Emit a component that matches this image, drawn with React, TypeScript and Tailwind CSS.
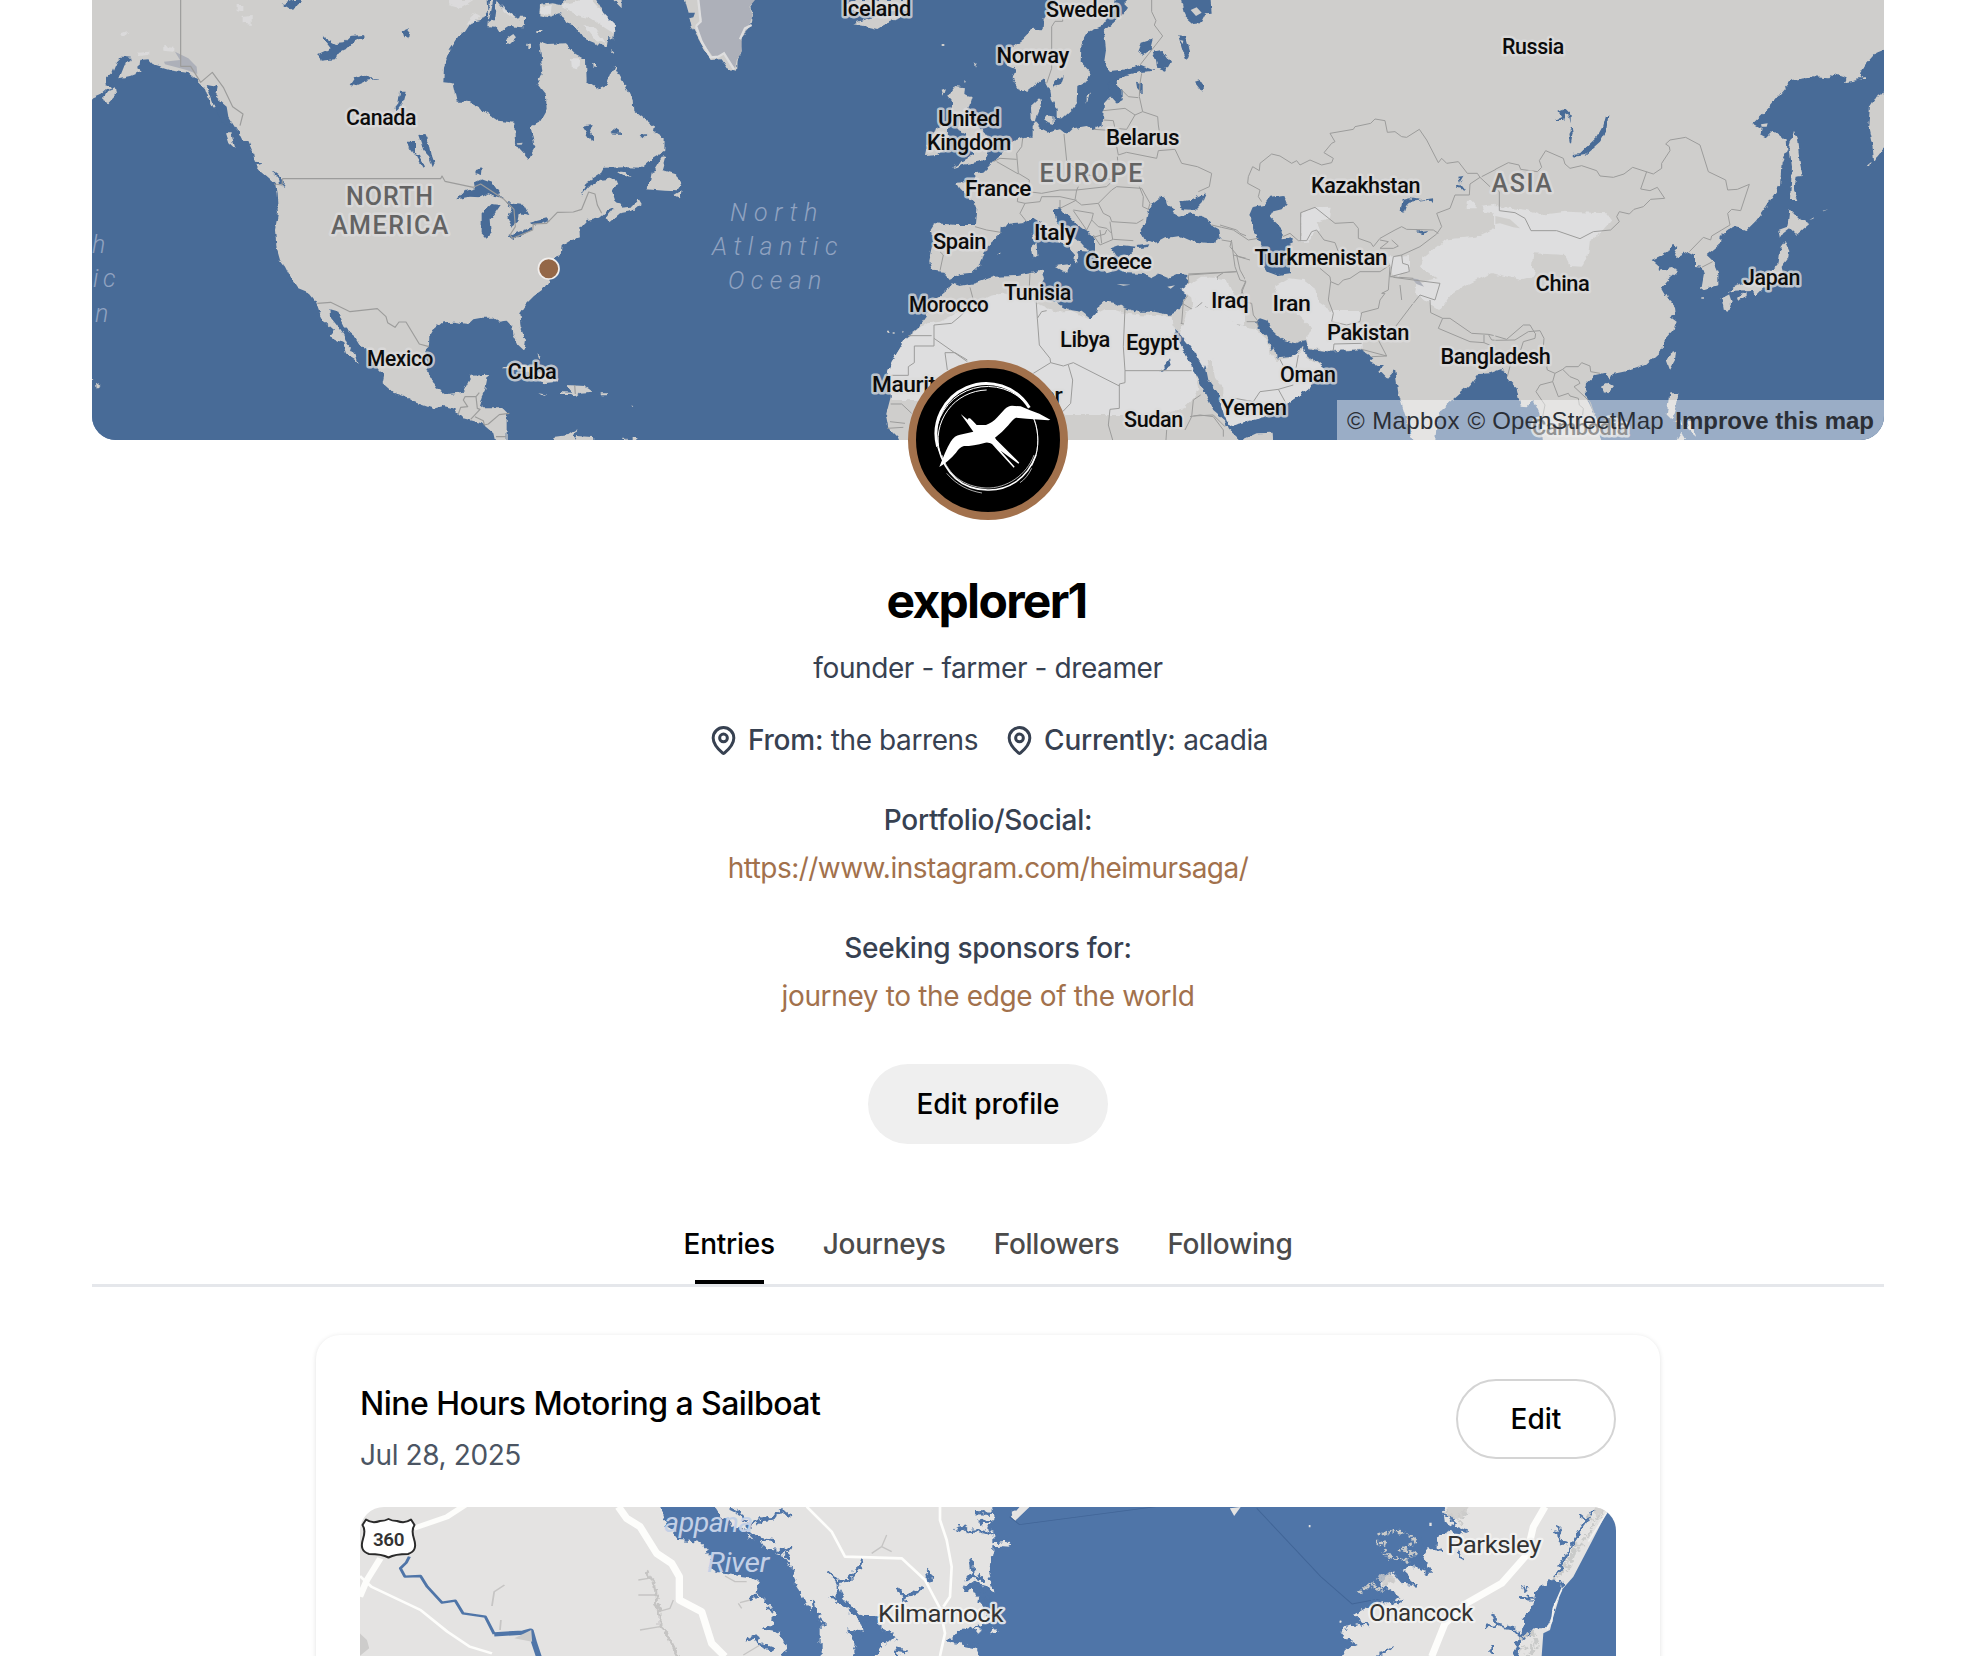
import React from "react";
import { MapPin } from "lucide-react";

const WATER = "#486b97";
const LAND = "#cfcecc";
const ARID = "#dededf";
const ICE = "#adb0b9";
const BORDER = "#9c9c9b";

type LabelProps = { t: string; a: number; b: number; y: number; size?: number; color?: string; spaced?: boolean };

function Label({ t, a, b, y, size = 22.8, color = "#0c0c0c", spaced }: LabelProps) {
  return (
    <text
      x={a}
      y={y}
      fontSize={size}
      fontWeight={500}
      fill={color}
      stroke="#dcdcdc"
      strokeOpacity={0.8}
      strokeWidth={5}
      strokeLinejoin="round"
      paintOrder="stroke"
      textLength={b - a}
      lengthAdjust={spaced ? "spacing" : "spacingAndGlyphs"}
    >
      {t}
    </text>
  );
}

function SeaLabel({ t, a, b, y }: LabelProps) {
  return (
    <text x={a} y={y} fontSize={25} fontStyle="italic" fontWeight={300} fill="#91a3c1" textLength={b - a} lengthAdjust="spacing">
      {t}
    </text>
  );
}

const countries: LabelProps[] = [
  { t: "Canada", a: 346, b: 416, y: 125 },
  { t: "Mexico", a: 367, b: 433, y: 366 },
  { t: "Cuba", a: 507.5, b: 556.5, y: 378.5 },
  { t: "Iceland", a: 842, b: 911, y: 16 },
  { t: "Sweden", a: 1046, b: 1120, y: 16.5 },
  { t: "Norway", a: 996.5, b: 1069, y: 63 },
  { t: "United", a: 938, b: 1000, y: 126 },
  { t: "Kingdom", a: 927, b: 1011, y: 150 },
  { t: "Belarus", a: 1106, b: 1179, y: 144.5 },
  { t: "France", a: 965, b: 1031, y: 196 },
  { t: "Spain", a: 933, b: 986, y: 248.5 },
  { t: "Italy", a: 1034, b: 1075.5, y: 239.5 },
  { t: "Greece", a: 1085, b: 1151.5, y: 268.5 },
  { t: "Tunisia", a: 1004, b: 1071, y: 300 },
  { t: "Morocco", a: 909, b: 988.5, y: 312 },
  { t: "Libya", a: 1060, b: 1110, y: 347 },
  { t: "Egypt", a: 1126, b: 1179, y: 350 },
  { t: "Mauritania", a: 872, b: 977, y: 391.5 },
  { t: "Niger", a: 1006, b: 1062.5, y: 403 },
  { t: "Sudan", a: 1124, b: 1183, y: 427 },
  { t: "Yemen", a: 1221, b: 1286.5, y: 415 },
  { t: "Oman", a: 1280, b: 1335.5, y: 382 },
  { t: "Pakistan", a: 1327, b: 1409, y: 339.5 },
  { t: "Iran", a: 1272.5, b: 1310.5, y: 310.5 },
  { t: "Iraq", a: 1211, b: 1248.5, y: 307.5 },
  { t: "Turkmenistan", a: 1254.5, b: 1387, y: 264.5 },
  { t: "Kazakhstan", a: 1311, b: 1420, y: 193 },
  { t: "Russia", a: 1502, b: 1564, y: 54 },
  { t: "China", a: 1535.5, b: 1589.5, y: 290.5 },
  { t: "Bangladesh", a: 1440.5, b: 1550.5, y: 364 },
  { t: "Japan", a: 1743, b: 1800, y: 284.5 },
  { t: "Cambodia", a: 1532, b: 1628, y: 435, color: "#3a3a3a" },
];

const continents: LabelProps[] = [
  { t: "NORTH", a: 346, b: 432.5, y: 205.3 },
  { t: "AMERICA", a: 331, b: 448, y: 234 },
  { t: "EUROPE", a: 1039.5, b: 1142, y: 181.7 },
  { t: "ASIA", a: 1491.5, b: 1551.5, y: 192 },
];

function WorldMap() {
  return (
    <svg viewBox="92 0 1792 440" className="block h-full w-full" fontFamily="Roboto, 'Liberation Sans', sans-serif">
      <defs>
        <filter id="coast" x="-5%" y="-5%" width="110%" height="110%" colorInterpolationFilters="sRGB">
          <feTurbulence type="fractalNoise" baseFrequency="0.05" numOctaves="2" seed="4" />
          <feDisplacementMap in="SourceGraphic" scale="16" xChannelSelector="R" yChannelSelector="G" />
        </filter>
      </defs>
      <rect x="92" y="0" width="1792" height="440" fill={WATER} />

      {/* North America */}
      <g transform="translate(80 0) scale(.33333)">
        <path
          fill={LAND}
          filter="url(#coast)"
          d="M20 -20V302L60 285 80 268 95 262 78 255 75 238 98 215 108 190 130 168 150 170 152 180 138 186 130 205 118 235 150 228 165 222 185 212 175 205 178 180 205 178 218 192 250 202 270 208 320 215 350 240 375 265 382 285 400 322 425 335 435 370 455 378 480 400 490 420 505 425 520 460 525 490 548 515 585 550 590 580 594 640 585 690 590 745 600 780 615 800 630 830 655 868 690 882 708 905 720 940 735 968 762 992 748 1008 790 1030 800 1065 825 1080 836 1094 830 1072 800 1030 790 1005 770 975 750 950 748 928 775 935 785 960 800 990 825 1010 840 1035 860 1050 880 1090 905 1115 912 1130 908 1150 940 1178 975 1190 1000 1205 1060 1226 1090 1218 1120 1225 1150 1255 1205 1270 1240 1300 1248 1335H1280L1280 1240 1265 1225 1210 1225 1198 1215 1205 1190 1215 1170 1224 1124 1175 1127 1165 1145 1150 1175 1100 1183 1070 1165 1050 1130 1040 1100 1035 1060 1047 1035 1048 1010 1060 990 1088 967 1120 965 1165 972 1180 958 1205 953 1240 953 1260 965 1280 962 1297 980 1300 1005 1315 1035 1333 1052 1338 1020 1322 980 1318 940 1335 915 1365 885 1390 867 1405 845 1408 800 1425 770 1442 765 1445 738 1470 722 1500 712 1498 685 1520 660 1560 650 1585 630 1610 625 1630 620 1605 600 1597 575 1610 550 1600 535 1560 540 1525 560 1502 587 1525 545 1560 522 1570 503 1640 502 1685 503 1720 475 1753 455 1754 415 1722 395 1725 380 1685 350 1660 330 1658 300 1635 255 1612 215 1603 197 1590 225 1580 255 1555 265 1520 243 1518 180 1490 165 1455 130 1405 132 1378 123 1387 215 1370 250 1398 285 1400 330 1380 365 1352 380 1360 420 1366 440 1345 478 1320 450 1305 430 1303 368 1255 362 1200 325 1165 305 1130 305 1118 253 1090 250 1092 200 1110 150 1135 112 1155 95 1175 65 1205 60 1225 30 1222 -20Z"
        />
        <path
          fill={LAND}
          filter="url(#coast)"
          d="M70 290L85 270 105 262 108 285 85 310 70 304ZM438 400H455L460 425 467 447 448 430ZM525 490L545 492 565 515 600 548 580 545 545 515ZM36 1135L40 1138 36 1142ZM48 1148L62 1158 50 1166ZM1230 0L1245 0 1262 20 1290 35 1335 70 1325 82 1285 78 1255 97 1245 80 1222 78ZM1278 120L1300 105 1308 115 1290 132 1278 130ZM1342 128H1350V150H1342ZM1698 568L1714 540 1718 518 1745 473 1756 472 1746 510 1788 523 1804 555 1792 574 1755 572Z"
        />
        <path filter="url(#coast)" fill={WATER} d="M725 110L750 122 768 132 790 130 812 108 845 105 848 115 825 120 800 148 775 160 765 178 722 182 715 162 752 145ZM965 92L990 82 985 112 970 115ZM812 255L825 235 855 224 870 235 903 235 860 242 825 257ZM960 275L977 275 968 310 950 330 943 325 955 310ZM982 425H1005V465L990 445ZM1015 405L1035 402 1048 430 1055 465 1064 490 1058 502 1048 470 1030 450ZM1005 460L1020 465 1035 500 1028 503 1010 475ZM1188 510L1205 505 1203 525 1186 520ZM1132 598L1150 575 1185 565 1182 548 1205 538 1238 550 1268 595 1225 580 1205 592 1170 590ZM1205 640L1235 612 1262 615 1245 640 1232 660 1235 700 1220 716 1205 700ZM1275 605L1330 612 1348 645 1320 640 1315 665 1295 680 1282 650 1295 630ZM1285 708L1355 680 1355 690 1300 720ZM1350 668L1400 655 1405 665 1360 678ZM1505 380L1538 375 1530 395 1545 420 1535 425ZM1588 400L1610 380 1625 402ZM1682 405L1702 402 1690 415ZM605 15L640 0H665L640 32 620 20ZM1240 0H1250L1242 60 1225 70ZM380 255L410 260 405 290 440 320 445 350 470 390 430 370 405 325ZM575 512L600 530 615 545 612 560 600 555 598 540ZM520 488L547 490 530 496Z" />
        <path fill={ARID} filter="url(#coast)" opacity=".8" d="M470 15L490 15 490 35 470 30ZM485 48L515 45 515 75 485 70ZM118 105L145 95 130 115ZM175 158L205 155 205 165 180 168ZM250 138L280 140 280 155 250 152ZM1105 0H1180L1140 25 1105 15ZM1160 75L1180 40 1200 50 1185 65ZM1265 15L1310 55 1270 35Z" />
        <path fill={ICE} d="M252 185L300 180 285 155 325 175 350 200 352 222 320 210 255 193Z" />
        <path fill={LAND} opacity=".9" d="M1310 430L1328 428 1325 434 1312 434Z" />
        <path
          fill="none"
          stroke={BORDER}
          strokeWidth="3.5"
          strokeLinejoin="round"
          d="M302 0V199H332L362 247 397 217 430 262 458 320 489 342 480 377M582 552L606 555 608 536H1082L1086 528 1095 544 1180 562 1202 552 1272 598 1302 628 1306 680 1290 705 1298 715 1358 690 1360 672 1400 670 1432 637 1480 636 1505 628 1526 576 1545 582 1552 615 1565 640M712 910L752 907 810 935 892 926 918 950 923 968 945 982 957 966 978 966 1018 1032 1047 1040M1188 1190H1155L1150 1200 1163 1220 1142 1222 1135 1242M1198 1178L1188 1190 1192 1225 1200 1228 1172 1258M1185 1250L1210 1262 1213 1275 1225 1272 1258 1244 1288 1240M1248 1310H1278"
        />
      </g>

      {/* Labrador islands, Greenland, Caribbean */}
      <g transform="translate(480 0) scale(.33333)">
        <path filter="url(#coast)" fill={LAND} d="M180 15L215 10 240 15 270 -10H345L375 45 405 75 400 118 385 110 380 143 335 125 310 115 288 80 260 70 240 40 205 52 178 45ZM395 -5H425V25ZM580 585L605 570 600 595ZM410 515L430 515 452 530 430 528ZM380 650L400 625 455 620 475 595 485 612 460 632 420 640 385 670ZM340 192H348V200H340ZM172 90H184V96H172ZM395 150L403 155 400 162ZM120 50H135V72H112Z" />
        <path filter="url(#coast)" fill={ARID} d="M240 15L330 -5 375 45 405 75 400 100 330 55 290 45ZM310 75L345 85 380 135 345 118ZM180 20L215 15 212 45 182 42ZM270 175L298 175 295 205 272 200Z" />
        <path filter="url(#coast)" fill={LAND} d="M612 -10H828L808 20 820 45 812 80 780 115 785 155 770 185 768 212 740 205 722 178 692 180 660 125 635 80 625 35ZM1120 70L1165 55 1200 50 1285 40 1230 65 1190 87 1150 75ZM1092 15L1130 0H1280V30H1110Z" />
        <path fill={ICE} d="M655 0H825L808 20 818 45 808 75 785 110 785 155 770 180 765 205 730 162 700 172 662 120 650 75 665 60Z" />
        <path d="M648 78L665 125 692 172 715 170 732 160 762 208M655 0L662 65 648 78M815 75L795 85 780 118" fill="none" stroke="#dededf" strokeWidth="7" />
        <path fill={WATER} d="M622 38L645 38 640 52 628 55Z" />
        <path filter="url(#coast)" fill={LAND} d="M68 1108L95 1092 150 1098 190 1122 238 1145 185 1150 170 1130 120 1108ZM175 1180L202 1184 190 1188ZM240 1176L275 1178 258 1155 315 1158 338 1175 300 1178 288 1188 270 1182 240 1182ZM362 1180H384V1186H362ZM218 1330L225 1310 265 1305 290 1288 280 1305 290 1330ZM285 1330L292 1305 335 1308 345 1330ZM172 1060L182 1068 178 1075ZM430 1316H440V1320H430ZM458 1314H466V1320H458Z" />
        <path fill={LAND} d="M1221 992h6v5h-6zM252 1130l4 2zM455 1215l5 5h-4z" />
        <path fill="none" stroke={BORDER} strokeWidth="3.5" d="M284 1155L286 1182" />
        <path fill={WATER} d="M402 600L440 607 438 612 410 608ZM455 610L470 600 472 606Z" />
      </g>

      {/* Europe and Africa */}
      <g transform="translate(860 0) scale(.33333)">
        <path
          fill={LAND}
          filter="url(#coast)"
          d="M600 -20L575 20 550 60 548 88 520 86 490 118 460 140 430 160 440 195 468 208 458 235 480 272 500 275 525 255 550 238 568 272 572 295 590 330 590 355 608 355 635 330 650 310 652 258 680 242 690 215 662 185 665 130 685 95 725 78 760 30 772 -20H800V25L782 50 745 80 732 95 738 150 732 190 750 213 800 208 840 195 885 212 840 216 800 225 770 240 772 262 785 270 785 300 770 308 752 288 732 310 728 375 700 388 680 378 640 385 622 402 600 385 560 395 540 385 528 370 512 360 510 320 540 292 545 315 535 340 528 365 518 378 518 410 495 410 465 420 440 450 400 485 370 515 342 520 345 545 290 548 300 565 325 590 350 615 345 675 290 675 225 670 212 690 220 730 208 785 218 812 250 815 270 838 300 822 335 818 362 795 368 770 385 735 420 705 422 680 460 672 490 670 520 652 545 668 555 695 590 720 625 742 645 765 642 790 652 785 655 765 650 752 685 755 660 728 620 695 590 665 580 630 600 620 615 640 640 665 695 705 705 715 705 760 720 795 740 820 755 815 758 790 765 765 752 745 780 735 830 740 805 765 775 768 780 800 800 820 850 822 875 835 900 822 930 835 960 822 982 825 982 850 975 890 960 930 930 945 880 935 830 935 795 925 765 908 735 905 712 925 705 950 690 955 665 935 630 930 580 905 560 900 535 870 552 840 545 812 510 820 470 828 400 830 345 850 300 858 275 850 262 868 235 890 205 905 200 950 175 985 140 1010 120 1045 95 1085 80 1130 95 1180 78 1245 85 1285 110 1310 120 1335H1118L1095 1260 1060 1230 1035 1180 1010 1130 985 1080 965 1040 942 1000 922 965 940 985 957 1000 980 1010 1005 1050 1035 1090 1045 1140 1080 1190 1110 1278 1175 1262V-20Z"
        />
        <path filter="url(#coast)" fill={LAND} d="M1105 1335L1095 1290 1090 1270 1108 1290 1130 1310 1135 1335ZM275 505L300 488 345 462 320 440 318 400 295 390 300 345 265 335 278 310 262 290 285 258 312 262 310 285 335 292 325 325 345 370 370 395 390 425 385 455 375 480 320 492ZM225 385L265 370 262 440 235 462 195 465 200 440 215 415ZM512 740L530 728 532 765 518 775ZM515 700L528 715 522 728ZM585 798L630 792 622 818ZM415 760L423 758 420 765ZM342 192L350 190 345 203ZM245 272L258 268 250 290ZM555 350L580 345 582 375 560 368ZM680 290L690 280 680 312ZM0 75L30 60 95 62 55 87Z" />
        <path fill={LAND} d="M245 132H253V138H245ZM313 240L318 246 313 248ZM82 992L90 998 84 999ZM98 997H104V1001H98ZM128 992L132 996 126 998Z" />
        <path
          fill={ARID}
          filter="url(#coast)"
          d="M140 1012L175 990 205 970 240 965 330 920 390 890 430 880 510 895 540 915 590 935 635 932 690 957 715 930 765 930 795 940 830 945 935 950 945 1000 970 1050 1005 1115 1015 1170 1000 1195 970 1225 920 1240 860 1245 620 1245 560 1250 190 1200 95 1200 80 1130 95 1085 120 1045ZM990 865L1030 835 1100 840 1120 880 1170 930V1262L1110 1278 1085 1190 1110 1190 1065 1130 1055 1080 1040 1080 1045 1110 1000 1045 970 1000 975 975 1000 930Z"
        />
        <path fill={LAND} d="M545 905L590 905 615 935 560 925ZM710 925L740 908 760 915 720 935ZM1005 865L990 850 982 830H1040L1030 850Z" />
        <path
          fill={WATER}
          filter="url(#coast)"
          d="M838 695L858 665 862 640 880 610 905 590 918 600 920 615 945 625 940 640 960 650 995 640 1040 655 1060 680 1078 690 1082 715 1060 730 1000 725 960 708 915 715 890 728 850 720ZM958 605L990 600 1038 580 1025 610 1005 630 965 628ZM832 735L868 730 862 742 835 744ZM835 155L845 128 878 118 870 150 850 165ZM878 155L905 150 930 185 915 212 892 205 888 180ZM955 108L975 112 990 165 980 180 968 150ZM958 -20H1050L1055 38 1035 40 1020 70 1000 72 975 50ZM1005 245L1020 240 1033 260 1028 275ZM580 262L588 238 608 232 600 255ZM742 250L765 240 770 262 745 268ZM828 245L845 250 845 282 832 268ZM900 1115L920 1092 930 1078 935 1095 912 1108ZM1165 640L1175 620 1200 620V700L1180 680Z"
        />
        <path fill={LAND} d="M992 30L1010 22 1025 38 1008 48ZM960 120L970 122 968 132ZM770 852L812 854 790 857ZM922 860L945 856 932 866Z" />
        <path
          fill="none"
          stroke={BORDER}
          strokeWidth="3"
          strokeLinejoin="round"
          d="M608 55V64H585L575 80V205L560 250M875 0V35L888 62 883 75 908 108 840 195M845 220L840 250 838 290 848 335M785 270L805 290 835 293M730 332L795 325 825 345 848 335 893 350 895 375M730 360L760 362 765 385 800 388 825 345M700 388L765 392 770 440 775 465M775 465L800 457 890 475 895 452 945 448 965 490 1012 500 1055 520 1048 560 1015 575M895 375L905 440M612 402L620 482 660 520 760 540 775 500 772 470M488 415L485 440 470 460 475 520 508 540 505 575 545 580 600 570 650 570 655 560M410 485L475 522M400 485L420 475 470 478M345 680L380 690 422 697M240 755L250 765 240 812M232 740L245 750M505 575L475 580 472 605 495 610 540 605 545 590 600 590 645 600 650 570 740 560 760 540M495 610L480 640 500 665M645 600L665 615 715 610 755 570 770 560 845 565 870 610 865 628 848 620 850 590 838 560M600 600V625L650 600M640 630L700 640 695 660 680 690 640 632M715 610L730 640 750 650 755 665 830 670 850 658M695 660L715 680 740 685 755 700 750 665M700 705L720 735 760 718 820 722M720 690L725 730M700 712L735 702 740 690M755 700L758 718M510 820L508 860 528 895 532 955 538 1035 570 1075 572 1088 610 1098 640 1088 778 1158M330 862L340 900 305 945 275 970 222 975V1038H163V1088L145 1100V1126H92M145 1007H215M222 1015L322 1085M322 1080L285 1058H255L262 1110M572 1088L520 1120M625 1095L638 1140 632 1210 608 1235M795 925L790 1040 795 1112H995M795 1112V1148L778 1152V1225L750 1228 745 1275 758 1320M532 955L545 935 560 932M1130 815L985 825M1130 765L1140 810 1158 842 1145 870 1165 930M985 825L988 880 970 905 965 970M1070 880L1072 830 1090 818M970 912L1000 930 1035 900 1070 880M1000 930L1015 955 985 975 962 970M1035 920L1075 940 1130 975 1180 980M1080 675L1130 690 1140 700 1190 720M1085 720L1115 725 1120 765 1158 775M92 1212H125L155 1240M90 1265L135 1270M82 1285L130 1282M1022 1185L1000 1200 995 1250 975 1290M1000 1248L1060 1245 1095 1280M920 1290L918 1320M1200 490L1175 510 1162 550 1180 575 1195 600"
        />
      </g>

      {/* Central and South Asia */}
      <g transform="translate(1180 0) scale(.33333)">
        <path
          fill={LAND}
          filter="url(#coast)"
          d="M195 -20V1262L240 1255 280 1240 330 1205 385 1165 395 1145 440 1110 405 1082 380 1068 368 1038 355 1060 330 1072 290 1075 285 1042 275 1050 262 1010 232 982 225 965 240 955 262 962 272 988 305 1018 345 1030 365 1022 378 1020 385 1045 450 1055 540 1048 580 1075 568 1085 590 1098 612 1098 598 1112 620 1135 645 1108 655 1180 680 1260 705 1335H768L775 1240 830 1190 870 1155 895 1122 930 1120 970 1105 988 1110V-20ZM180 1335L190 1318 230 1300 278 1298 280 1335Z"
        />
        <path filter="url(#coast)" fill={ARID} d="M0 1000L20 935 60 915 130 940 170 975 225 985 262 1020 272 1060 290 1080 330 1075 360 1060 372 1045 378 1070 440 1110 395 1145 385 1165 330 1205 240 1255 145 1278 120 1200 130 1195 130 1160 100 1110 100 1080 80 1078 75 1110 40 1050ZM285 860L330 835 370 840 410 870 415 905 450 930 540 930 545 1045 450 1052 385 1040 380 1015 395 985 350 940 300 900ZM365 640L405 622 455 620 450 655 410 665 420 690 400 700 380 725H362ZM720 800L735 770 800 718 890 710 980 670 1060 690H1200V820L1060 805 1050 820 930 820 860 855 820 880 780 930 755 915 705 880 710 850 770 835ZM905 620L960 612 1060 650 1150 640 1200 650V700L1130 690 1050 690 1000 650 910 635ZM860 605H890V625H860ZM620 770L690 765 690 815 640 830ZM0 870L60 830 110 830 155 880 130 900 60 905Z" />
        <path filter="url(#coast)" fill={WATER} d="M205 645L215 622 250 615 268 590 310 585 320 610 305 628 275 635 270 650 290 670 308 690 308 715 335 712 342 730 325 738 318 770 330 800 330 820 290 826 262 815 245 790 245 740 220 690 218 665ZM662 630L668 600 690 595 720 600 760 595 758 605 735 600 690 605 678 618 672 635ZM708 695L745 690 730 703ZM835 530L850 528 838 548 855 570 828 562 840 552Z" />
        <path fill={ICE} d="M695 835L715 838 732 860 710 852Z" />
        <path
          fill="none"
          stroke={BORDER}
          strokeWidth="3"
          strokeLinejoin="round"
          d="M245 605L235 590 240 570 203 550 205 530 218 500 238 512 240 490 275 462 300 468 335 490 350 482 360 495 390 480 425 495 455 488 460 475 432 458 455 430 465 425 450 400 520 388 525 380 572 370 585 357 615 362 622 397 645 395 665 410 680 412 718 388 740 420 775 488 785 475 800 490 835 485 862 520 892 520 900 532 930 560M362 722V638L405 622 465 670 520 667 535 685V715L572 728 580 740 600 715 645 690 665 680 680 688 760 690 775 700M900 532L870 552 868 585H825L810 625 770 640 785 680 770 702 720 740 665 765 640 770 630 830 700 835M905 530L948 508M355 722L380 722 395 695 410 690 432 720 465 728 475 755M600 720L625 725 600 745 640 745 655 738 635 720M308 710L330 700 355 722M420 805L450 830 452 845 445 900 460 940 455 965 500 975 540 965 545 938 595 925 600 900 615 880 605 880 625 870 630 800M452 845L475 855 490 840 510 835 540 815 600 815 630 795M160 765L165 800 180 840 198 845 182 885 190 905 215 910 220 945 235 965M210 780L175 770 150 740 155 720M25 822L170 815M200 965L230 965 235 980M95 675L125 682 160 690 205 720 235 715M698 912L648 978M750 900L752 938 788 955 810 955 875 1000 925 1003 948 1008M788 955L775 985 870 1025 912 1028V1005M912 1028L940 1040M925 1003L935 1020 950 1021M545 1048L620 1068 595 1020M620 1068L575 1070M460 1050L462 1032 545 1030M665 765L668 790 685 795 688 815 632 830M165 1195L220 1205 240 1175 295 1168 318 1210M295 1168L340 1155M300 1078L310 1098M348 1105L355 1065M30 1250L60 1245 100 1250 130 1290 130 1310M935 1045L925 1100M640 832L700 840 780 850 765 900 720 885 700 910M660 855L665 900"
        />
      </g>

      {/* East Asia */}
      <g transform="translate(1500 0) scale(.33333)">
        <path
          fill={LAND}
          filter="url(#coast)"
          d="M-16 -20V1100L8 1105 25 1140 50 1165 62 1220 80 1222 100 1200 118 1240 130 1335H310L292 1260 265 1205 255 1170 258 1150 285 1125 318 1118 328 1142 338 1122 385 1112 435 1095 488 1048 490 1025 520 992 530 965 512 952 528 945 525 920 508 900 485 860 505 838 535 812 515 804 480 812 478 800 455 780 480 768 505 752 515 735 532 740 522 765 530 774 565 755 585 765 585 798 605 800 612 820 603 870 655 855 655 820 638 782 620 765 660 732 662 708 700 680 740 690 765 665 800 618 840 555 845 490 862 450 860 418 850 415 820 392 800 412 782 402 785 388 757 372 800 330 850 270 875 240 940 232 985 235 1000 222 1040 235 1035 247 1090 238 1080 220 1095 195 1130 155 1152 146 1170 140V-20ZM1152 276L1130 288 1110 320 1105 380 1118 440 1122 482 1152 445 1170 430V270ZM882 392L892 420 898 480 908 528 890 530 882 570 895 600 870 600 876 500 868 440ZM868 628L895 655 928 672 890 704 870 685 850 700 840 715 835 690 862 680ZM855 722L868 750 865 775 845 800 850 830 820 852 790 862 765 888 758 870 700 872 685 880 700 862 735 850 800 820 835 795 842 740ZM665 895L690 882 698 905 685 935 672 932ZM708 890L740 876 740 888 712 902ZM500 1080L510 1060 528 1052 525 1080 510 1107ZM303 1160L325 1148 342 1158 325 1180 308 1172ZM508 1180H535L530 1220 520 1255 500 1245ZM1100 500L1115 488 1110 502ZM520 1265L540 1258 545 1275ZM560 1265H580L588 1310 565 1290ZM530 1320L545 1295 555 1320ZM1072 232H1095V240H1072Z"
        />
        <path fill={LAND} d="M968 632L985 628 970 634ZM604 892H612V896H604ZM928 660L942 652 940 656Z" />
        <path filter="url(#coast)" fill={ARID} d="M-18 618L80 630 120 645 200 635 320 640 335 660 300 700 270 720 265 760 245 800 210 798 195 765 100 760 95 805 110 825 60 840 -18 820Z" />
        <path fill={LAND} d="M-14 648L30 658 60 685 40 682 0 670 -14 672Z" />
        <path filter="url(#coast)" fill={WATER} d="M217 462L240 460 290 412 305 385 315 348 325 348 318 395 300 425 255 465 225 470ZM165 360L185 350 175 335 195 328 212 345 212 370 205 345 195 340 190 360ZM205 400L215 380 218 400 213 428H209ZM792 372H802V378H792Z" />
        <path fill={LAND} d="M783 373L803 370 800 380 785 380Z" />
        <path
          fill="none"
          stroke={BORDER}
          strokeWidth="3"
          strokeLinejoin="round"
          d="M-14 508L25 488 57 495 62 508 112 515 125 502 118 482 137 452 190 475 195 492 210 505 245 497 290 512 300 528 340 532 372 522 398 502 460 522 485 505V490L510 452 508 440 497 432 510 420 557 412 600 435 625 515 677 540 683 570 712 568 748 553 722 632 695 628 683 640 690 675 665 690 635 708 632 720 610 712 568 755M440 515L422 567 450 572 472 562 494 595 452 598 430 620 402 628 388 642 358 635 350 650 358 665 332 690 280 695 240 716 170 692H93L75 655 45 638 -2 632V575L-14 565M605 802L638 785M140 1100L142 1110 165 1120 188 1108 198 1100 235 1100 245 1088 270 1098 272 1115 300 1120M188 1108L210 1130 235 1140 240 1150 222 1160 270 1205 285 1250M165 1120L158 1145 175 1190 205 1180 210 1188 235 1195 238 1215 250 1225 248 1245M158 1145L120 1155 108 1175 135 1215 128 1250M-14 1008L20 1018 70 975 90 975 105 1000M-14 1021L45 1020 85 995 120 992 132 1015 130 1040 142 1100M62 1050L70 1025 105 1015 107 1000M22 1130L35 1080"
        />
      </g>

      {countries.map((c) => (
        <Label key={c.t} {...c} />
      ))}
      {continents.map((c) => (
        <Label key={c.t} {...c} size={25} color="#636363" spaced />
      ))}
      <SeaLabel t="North" a={730} b={817} y={220.5} />
      <SeaLabel t="Atlantic" a={712} b={837} y={255} />
      <SeaLabel t="Ocean" a={728} b={821} y={288.5} />
      <SeaLabel t="h" a={92} b={106} y={252.5} />
      <SeaLabel t="ic" a={93} b={115} y={286.6} />
      <SeaLabel t="n" a={95} b={109} y={321.5} />

      <circle cx="548.7" cy="268.7" r="10.3" fill="#946747" stroke="#f1eeec" strokeWidth="1.7" />
    </svg>
  );
}

function BayMap() {
  return (
    <svg viewBox="360 1507 1256 149" className="block h-[149px] w-full" fontFamily="Roboto, 'Liberation Sans', sans-serif">
      <defs>
        <filter id="inlets" x="-5%" y="-5%" width="110%" height="110%" colorInterpolationFilters="sRGB">
          <feTurbulence type="fractalNoise" baseFrequency="0.06" numOctaves="2" seed="9" />
          <feDisplacementMap in="SourceGraphic" scale="26" xChannelSelector="R" yChannelSelector="G" />
        </filter>
      </defs>
      <rect x="360" y="1507" width="1256" height="149" fill="#e4e3e2" />

      {/* Far west: creek and highways */}
      <g transform="translate(300 1320) scale(.44643 .33333)" fill="none" strokeLinejoin="round">
        <path stroke="#4f75a8" strokeWidth="7" d="M245 710L238 728 225 745 235 770 270 768 285 800 318 848 348 842 365 880 415 890 435 942" />
        <path stroke="#4f75a8" strokeWidth="13" d="M435 943L500 938 517 932 525 970 535 1010" />
        <path fill="#cdcccb" d="M480 955L518 930 520 965ZM134 940L150 960 155 985 134 1008Z" />
        <path stroke="#c6c5c4" strokeWidth="4" d="M458 795L435 815 430 858M450 900L448 930" />
        <path stroke="#fdfdfb" strokeWidth="15" d="M370 555L330 590 255 625M180 715L150 780 134 830" />
        <path stroke="#fdfdfb" strokeWidth="7" d="M134 768L160 800 270 870 330 935 380 980 430 1000" />
      </g>

      {/* Rappahannock and Kilmarnock */}
      <g transform="translate(580 1500) scale(.33333)" strokeLinejoin="round">
        <path filter="url(#inlets)" fill="#4f75a8" d="M235 0H390L425 55 450 60 460 85 500 85 505 115 540 120 560 150 610 165 640 215 650 260 685 320 710 345 722 370V490H600L620 450 600 400 578 385 582 330 555 300 530 280 535 245 500 230 415 220 390 205 385 150 360 125 295 120 260 75Z" />
        <path filter="url(#inlets)" fill="none" stroke="#4f75a8" strokeWidth="9" d="M450 25L490 45 495 70M500 85L540 60 575 55 605 35 635 45M490 85L525 115 585 125M560 150L610 155 635 140M615 160L630 175M530 285L510 300M560 322L580 330M550 382L590 385M500 420L530 410 540 435 580 450M700 300L705 345 735 375M695 330L720 345" />
        <path filter="url(#inlets)" fill="#4f75a8" d="M770 240L780 270 795 300 825 330 850 345 890 345 900 385 930 400 950 415 905 435 870 490H810L830 440 800 390 850 400 840 365 800 325 765 300 770 280Z" />
        <path filter="url(#inlets)" fill="none" stroke="#4f75a8" strokeWidth="9" d="M845 178L835 205 805 240 775 245 745 215M750 290L790 300M1045 210L1048 240 1060 235M950 262L975 290 1025 270 1020 260M975 290L965 320M890 380L945 410M850 370L905 345M950 468V450L980 455M800 390L850 400 830 430" />
        <path filter="url(#inlets)" fill="#4f75a8" d="M1240 0H1340V490H1200L1190 440 1150 430 1110 425 1130 400 1180 380 1230 370 1215 330 1180 270 1150 265 1185 240 1240 275 1225 220 1240 150 1240 105 1225 80 1240 60Z" />
        <path filter="url(#inlets)" fill="none" stroke="#4f75a8" strokeWidth="10" d="M1185 38L1245 40M1195 70L1240 60M1125 92L1145 80 1165 95 1200 92 1235 102M1172 175L1180 225 1155 240M1180 225L1215 240M1150 268L1200 262 1230 300M1190 300L1240 310M1130 395L1240 390M1105 420L1200 440" />
        <path filter="url(#inlets)" fill="#e4e3e2" d="M1240 130L1285 125 1288 138 1240 142ZM1295 35L1320 25V55L1300 55ZM1180 385L1195 405 1205 385ZM1230 400L1240 385 1250 395Z" />
        <path filter="url(#inlets)" fill="none" stroke="#c5c4c3" strokeWidth="9" d="M200 215L225 255 230 310 240 345 240 380 260 400 285 450 300 478" />
        <path fill="none" stroke="#c5c4c3" strokeWidth="4" d="M175 240L205 235M175 285L225 285M235 335L270 325 280 300M180 390L240 380M435 228L465 245 500 245M920 105L905 140 875 160M905 140L935 155M475 310L485 325M480 308L510 300M490 465L540 435" />
        <path fill="none" stroke="#fdfdfb" strokeWidth="22" d="M115 20L140 55 180 80 230 160 275 190 298 230 298 300 365 335 395 430 435 470" />
        <path fill="none" stroke="#fdfdfb" strokeWidth="8" d="M680 20L755 95 795 170 965 175 1035 240 1080 325 1095 400 1080 468M1080 20V60L1100 120 1115 200 1110 290 1090 320" />
      </g>

      {/* Chesapeake Bay */}
      <path fill="#4f75a8" d="M1016 1507H1500V1656H1016Z" />
      <g transform="translate(1000 1320) scale(.43365 .33333)">
        <path fill="#e4e3e2" d="M25 590L45 561H68L35 602ZM530 565L555 561 540 588ZM0 678L15 665 22 680ZM783 902H787V908H783ZM712 615H716V622H712Z" />
        <path fill="none" stroke="#416597" strokeWidth="2.5" d="M22 590L45 614 360 560M592 565L740 770 812 852 880 835" />
      </g>

      {/* Eastern Shore */}
      <g transform="translate(1320 1500) scale(.33333)" strokeLinejoin="round">
        <path filter="url(#inlets)" fill="#e4e3e2" d="M365 0H920V490H55L75 450 110 435 65 405 75 375 105 375 130 365 105 345 150 320 185 310 215 310 235 290 200 265 180 250 215 215 245 250 280 255 245 210 270 195 300 205 335 215 310 165 325 145 350 155 345 115 365 105 385 95 425 105 410 80 375 70Z" />
        <path fill="#4f75a8" d="M860 38L815 125 760 230 725 270 700 350 690 390 670 400 665 468H900V20Z" />
        <path filter="url(#inlets)" fill="#4f75a8" d="M575 490L590 420 605 400 610 355 640 320 645 280 690 240 730 245 725 280 705 310 695 350 680 385 650 385 625 410 600 430 590 490Z" />
        <path filter="url(#inlets)" fill="none" stroke="#4f75a8" strokeWidth="8" d="M825 25L800 60 770 110 745 155 720 200 700 245M715 80L722 125 740 130M700 95L725 100M780 45L800 60M495 382L530 375 520 342M530 375L580 385 605 410M600 292L640 295M610 260L615 275M625 255L620 275M515 435V465M370 40L405 60 400 80 440 95M350 110L345 145 370 155M295 110L310 150 300 190 310 212 335 218M245 215L288 258M415 150L428 180M150 305L190 290 215 310 250 300M170 468L215 440M70 380L110 365 150 378" />
        <path filter="url(#inlets)" fill="none" stroke="#c9cac9" strokeWidth="11" strokeDasharray="9 7 15 5 5 8" d="M170 105L210 95 260 100 290 125 240 150 285 160 260 180 200 170 190 130 165 130M850 35L830 60 800 110 780 140 745 180 725 215 700 240M770 130L740 220M600 420L640 395 650 430 600 450M120 280L150 250 180 270 210 245 215 225M375 30L400 55 440 35 420 70M800 45L820 60M620 468L650 440" />
        <path filter="url(#inlets)" fill="#cdcccb" opacity=".8" d="M380 10H455L420 60 385 45ZM820 10H850L855 40 825 50ZM170 240L210 215 225 240 200 255Z" />
        <path fill="none" stroke="#f1f1f0" strokeWidth="5" d="M860 38L805 125M725 268L700 325 695 365 680 388" />
        <path fill="#e4e3e2" d="M328 68H335V78H328ZM60 362H64V366H60Z" />
        <path fill="none" stroke="#fdfdfb" strokeWidth="21" d="M675 20L640 80 620 165 545 250 440 310 375 370 355 420 335 470" />
      </g>

      {/* Route shield */}
      <path
        d="M366 1519.500Q372 1524 380 1521Q385 1521 388.500 1519Q392 1521 397 1521Q405 1524 411 1519.500L414.500 1525Q411 1530 414 1539Q418 1551 408 1554Q395 1554 388.500 1557.500Q382 1554 369 1554Q359 1551 363 1539Q366 1530 362.500 1525Z"
        fill="#fff"
        stroke="#2b2b2b"
        strokeWidth="2"
        strokeLinejoin="round"
      />
      <text x="373" y="1546" fontSize="18.500" fontWeight="600" fill="#333" textLength="31" lengthAdjust="spacingAndGlyphs">
        360
      </text>

      <g fill="#c3d0e6" fontSize="27" fontStyle="italic">
        <text x="664" y="1532" textLength="89" lengthAdjust="spacingAndGlyphs">
          appana
        </text>
        <text x="707" y="1571.500" textLength="62" lengthAdjust="spacingAndGlyphs">
          River
        </text>
      </g>
      <g fill="#333" fontSize="24" stroke="#f4f4f3" strokeOpacity=".85" strokeWidth="4.500" strokeLinejoin="round" paintOrder="stroke">
        <text x="878" y="1621.500" textLength="125" lengthAdjust="spacingAndGlyphs">
          Kilmarnock
        </text>
        <text x="1447" y="1552.500" textLength="94" lengthAdjust="spacingAndGlyphs">
          Parksley
        </text>
        <text x="1369" y="1620.500" textLength="104" lengthAdjust="spacingAndGlyphs">
          Onancock
        </text>
      </g>
    </svg>
  );
}

function Avatar() {
  return (
    <div className="absolute top-[360px] left-1/2 size-40 -translate-x-1/2 overflow-hidden rounded-full border-8 border-[#a2714c] bg-black">
      <svg viewBox="108 84 432 432" className="block size-full" fill="none" stroke="#fff">
        <path strokeWidth="9" d="M173 320A151 151 0 0 1 448 203" />
        <path strokeWidth="3" d="M167 300A156 156 0 0 1 430 182M180 340A149 149 0 0 1 320 150" />
        <path strokeWidth="3" d="M458 230C474 260 478 310 468 345" />
        <path strokeWidth="2" d="M462 235C482 290 474 340 455 378" />
        <path strokeWidth="5" d="M468 345C440 420 380 452 322 450C260 448 200 420 174 320" />
        <path strokeWidth="2" d="M462 345C440 405 380 446 318 444C250 440 205 405 186 345M200 400C230 435 265 452 306 459M455 385C445 405 435 418 420 428" />
        <path
          fill="#fff"
          stroke="none"
          d="M178 381C190 350 200 325 212 305Q224 286 240 284L280 275L262 250L242 222L264 240Q262 233 270 235Q278 242 290 255L318 255Q338 248 352 232L374 208Q384 197 396 197L422 199Q450 212 478 221L511 239L505 241L440 236L408 233Q398 238 385 256Q368 276 345 293L362 326Q330 304 316 308Q280 318 252 318Q240 320 228 338Q206 364 178 381Z"
        />
        <path fill="#fff" stroke="none" d="M340 290L418 368 415 371 362 332 404 380 401 383 352 330 330 305Z" />
      </svg>
    </div>
  );
}

const tabs = ["Entries", "Journeys", "Followers", "Following"];

export default function App() {
  return (
    <div className="h-[1656px] w-full overflow-hidden bg-white pr-[94px] pl-[92px] font-['Inter',sans-serif] text-[28px] leading-10 tracking-[-0.4px] text-[#374151]">
      <header className="relative h-[577px]">
        <div className="relative h-[440px] overflow-hidden rounded-b-[24px] bg-[#486b97]">
          <WorldMap />
          <div className="absolute right-0 bottom-0 flex h-10 w-[547px] items-center justify-between bg-white/45 px-[10px] pt-px font-['Liberation_Sans',sans-serif] text-[24px] tracking-[0.15px] whitespace-nowrap text-[#2b2f36]">
            <span className="tracking-[0.4px]">© Mapbox</span>
            <span className="mr-1">© OpenStreetMap</span>
            <span className="font-bold tracking-normal">Improve this map</span>
          </div>
        </div>
        <Avatar />
      </header>

      <section className="flex flex-col items-center">
        <h1 className="mr-[3px] text-[48px] leading-[48px] font-bold tracking-[-1.7px] text-black">explorer1</h1>
        <p className="mt-[23px]">founder - farmer - dreamer</p>
        <div className="mt-8 flex items-center gap-[26px]">
          {[
            ["From:", "the barrens"],
            ["Currently:", "acadia"],
          ].map(([k, v]) => (
            <span key={k} className="flex items-center gap-[9px]">
              <MapPin size={31} strokeWidth={2.3} />
              <span>
                <span className="font-medium tracking-[-0.2px]">{k}</span> {v}
              </span>
            </span>
          ))}
        </div>
        <p className="mt-10 font-medium tracking-[-0.24px]">Portfolio/Social:</p>
        <a className="mt-2 tracking-[-0.54px] text-[#a2714c]">https://www.instagram.com/heimursaga/</a>
        <p className="mt-10 font-medium tracking-[-0.26px]">Seeking sponsors for:</p>
        <a className="mt-2 tracking-[-0.36px] text-[#a2714c]">journey to the edge of the world</a>
        <button className="mt-12 h-20 w-60 rounded-full bg-[#efefef] font-medium tracking-[-0.1px] text-black">Edit profile</button>
      </section>

      <nav className="mt-[60px] flex h-[83px] justify-center gap-12 border-b-[3px] border-[#e5e7eb] font-medium tracking-[-0.26px]">
        {tabs.map((t, i) => (
          <div key={t} className={i === 0 ? "flex flex-col items-center justify-between text-black" : "text-[#4b4b4b]"}>
            <span className="mt-5 block">{t}</span>
            {i === 0 && <span className="h-1 w-[69px] bg-black" />}
          </div>
        ))}
      </nav>

      <article className="mx-auto mt-12 w-[1344px] rounded-[24px] bg-white px-11 pt-11 pb-16 shadow-[0_1px_5px_rgba(0,0,0,0.12)]">
        <div className="flex h-32 items-start justify-between">
          <div className="pt-[5px]">
            <h2 className="text-[32px] leading-[40px] font-medium tracking-[-0.54px] text-black">Nine Hours Motoring a Sailboat</h2>
            <p className="mt-[11px] text-[#4b5563]">Jul 28, 2025</p>
          </div>
          <button className="h-20 w-40 rounded-full border-2 border-[#d4d4d4] font-medium tracking-normal text-black">Edit</button>
        </div>
        <div className="overflow-hidden rounded-t-[24px]">
          <BayMap />
        </div>
      </article>
    </div>
  );
}
